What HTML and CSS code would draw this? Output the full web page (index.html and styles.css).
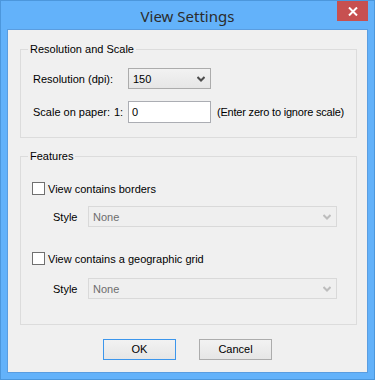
FILE: index.html
```html
<!DOCTYPE html>
<html>
<head>
  <meta charset="utf-8">
  <title>View Settings</title>
  <link rel="stylesheet" href="styles.css">
</head>
<body>
  <div class="window">
    <div class="titlebar">
      <span class="title">View Settings</span>
      <div class="close">
        <svg width="10" height="9" viewBox="0 0 10 9"><path d="M1 0.5 L9 8.5 M9 0.5 L1 8.5" stroke="#fff" stroke-width="2"/></svg>
      </div>
    </div>
    <div class="client">
      <fieldset class="group res">
        <legend>Resolution and Scale</legend>
        <div class="row">
          <span class="lbl wide">Resolution (dpi):</span>
          <div class="combo small"><span>150</span>
            <svg width="8" height="6" viewBox="0 0 8 6"><path d="M0.5 1 L4 4.5 L7.5 1" stroke="#4d4d4d" stroke-width="2" fill="none"/></svg>
          </div>
        </div>
        <div class="row scale">
          <span class="lbl">Scale on paper:</span>
          <span class="ratio">1:</span>
          <div class="textbox">0</div>
          <span class="hint">(Enter zero to ignore scale)</span>
        </div>
      </fieldset>

      <fieldset class="group feat">
        <legend>Features</legend>
        <div class="check"><span class="box"></span>View contains borders</div>
        <div class="row style">
          <span class="stylelbl">Style</span>
          <div class="combo off"><span>None</span>
            <svg width="8" height="6" viewBox="0 0 8 6"><path d="M0.5 1 L4 4.5 L7.5 1" stroke="#bdbdbd" stroke-width="2" fill="none"/></svg>
          </div>
        </div>
        <div class="check second"><span class="box"></span>View contains a geographic grid</div>
        <div class="row style">
          <span class="stylelbl">Style</span>
          <div class="combo off"><span>None</span>
            <svg width="8" height="6" viewBox="0 0 8 6"><path d="M0.5 1 L4 4.5 L7.5 1" stroke="#bdbdbd" stroke-width="2" fill="none"/></svg>
          </div>
        </div>
      </fieldset>

      <div class="buttons">
        <div class="btn default">OK</div>
        <div class="btn">Cancel</div>
      </div>
    </div>
  </div>
</body>
</html>
```

FILE: styles.css
```css
html, body {margin: 0; padding: 0; background: #fff;}
body {font-family: "Liberation Sans", Arial, sans-serif; font-size: 11px; color: #000;}

.window {position: relative; width: 375px; height: 380px; box-sizing: border-box; background: #63b2fa;
  border: 1px solid #4c97dc; padding: 0 6px 6px 6px;}

.titlebar {height: 28px; display: flex; align-items: center; justify-content: center;}
.title {font-family: "Noto Sans", sans-serif; font-size: 15px; color: #2c2c2c; margin-top: 1px;}
.close {position: absolute; top: 0; right: 6px; width: 31px; height: 20px; background: #c75050;
  display: flex; align-items: center; justify-content: center;}

.client {height: 344px; box-sizing: border-box; background: #f0f0f0; border: 1px solid #5a9de0;
  padding: 13px 10px 0 12px;}

.group {margin: 0; padding: 0 12px; border: 1px solid #dcdcdc; min-width: 0;}
.group legend {padding: 0 2px; margin-left: -5px; line-height: 13px; white-space: nowrap;}

.res {padding-top: 12px; padding-bottom: 14px;}
.row {display: flex; align-items: center; white-space: nowrap;}
.row > * {flex-shrink: 0;}
.lbl {width: 81px;}
.lbl.wide {width: 95px;}
.ratio {width: 14px;}
.scale {margin-top: 12px;}

.combo {height: 21px; box-sizing: border-box; border: 1px solid #acacac; display: flex; align-items: center;
  justify-content: space-between; padding: 0 5px 0 4px;
  background: linear-gradient(#f2f2f2, #e6e6e6);}
.combo.small {width: 83px;}
.combo.off {width: 249px; border-color: #d9d9d9; background: #efefef; color: #6d6d6d;}

.textbox {width: 83px; height: 22px; box-sizing: border-box; border: 1px solid #abadb3; background: #fff;
  padding: 0 3px; line-height: 20px;}
.hint {margin-left: 6px; letter-spacing: -0.2px;}

.feat {margin-top: 12px; padding-top: 19px; padding-bottom: 25px;}
.check {display: flex; align-items: center; height: 13px; margin-left: -1px; white-space: nowrap;}
.check.second {margin-top: 25px;}
.box {width: 13px; height: 13px; box-sizing: border-box; border: 1px solid #707070; background: #fff; margin-right: 3px;}
.style {margin-top: 11px; padding-left: 20px;}
.check.second + .style {margin-top: 13px;}
.stylelbl {width: 35px;}

.buttons {display: flex; justify-content: center; gap: 23px; margin-top: 14px; padding-right: 2px;}
.btn {width: 73px; height: 21px; box-sizing: border-box; border: 1px solid #acacac; text-align: center;
  line-height: 19px; background: linear-gradient(#f2f2f2, #e6e6e6);}
.btn.default {border-color: #3c96ec;}
```
